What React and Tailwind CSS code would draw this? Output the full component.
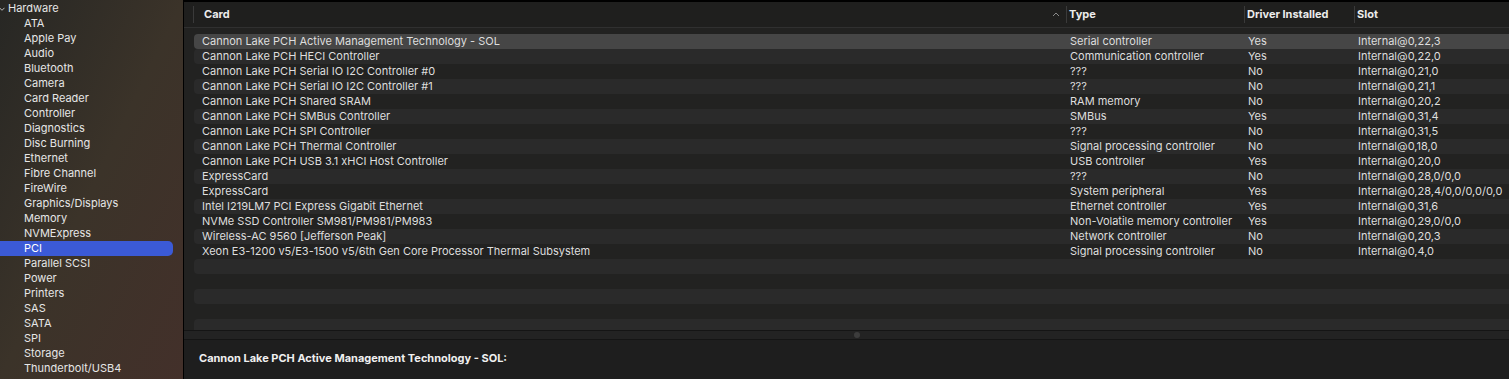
import React from 'react'

const sidebarItems = [
  'ATA', 'Apple Pay', 'Audio', 'Bluetooth', 'Camera', 'Card Reader', 'Controller',
  'Diagnostics', 'Disc Burning', 'Ethernet', 'Fibre Channel', 'FireWire',
  'Graphics/Displays', 'Memory', 'NVMExpress', 'PCI', 'Parallel SCSI', 'Power',
  'Printers', 'SAS', 'SATA', 'SPI', 'Storage', 'Thunderbolt/USB4',
]

const cards = [
  ['Cannon Lake PCH Active Management Technology - SOL', 'Serial controller', 'Yes', 'Internal@0,22,3'],
  ['Cannon Lake PCH HECI Controller', 'Communication controller', 'Yes', 'Internal@0,22,0'],
  ['Cannon Lake PCH Serial IO I2C Controller #0', '???', 'No', 'Internal@0,21,0'],
  ['Cannon Lake PCH Serial IO I2C Controller #1', '???', 'No', 'Internal@0,21,1'],
  ['Cannon Lake PCH Shared SRAM', 'RAM memory', 'No', 'Internal@0,20,2'],
  ['Cannon Lake PCH SMBus Controller', 'SMBus', 'Yes', 'Internal@0,31,4'],
  ['Cannon Lake PCH SPI Controller', '???', 'No', 'Internal@0,31,5'],
  ['Cannon Lake PCH Thermal Controller', 'Signal processing controller', 'No', 'Internal@0,18,0'],
  ['Cannon Lake PCH USB 3.1 xHCI Host Controller', 'USB controller', 'Yes', 'Internal@0,20,0'],
  ['ExpressCard', '???', 'No', 'Internal@0,28,0/0,0'],
  ['ExpressCard', 'System peripheral', 'Yes', 'Internal@0,28,4/0,0/0,0/0,0'],
  ['Intel I219LM7 PCI Express Gigabit Ethernet', 'Ethernet controller', 'Yes', 'Internal@0,31,6'],
  ['NVMe SSD Controller SM981/PM981/PM983', 'Non-Volatile memory controller', 'Yes', 'Internal@0,29,0/0,0'],
  ['Wireless-AC 9560 [Jefferson Peak]', 'Network controller', 'No', 'Internal@0,20,3'],
  ['Xeon E3-1200 v5/E3-1500 v5/6th Gen Core Processor Thermal Subsystem', 'Signal processing controller', 'No', 'Internal@0,4,0'],
]

const cols = 'grid grid-cols-[873px_178px_110px_1fr]'

const Sidebar = () => (
  <div className="w-[183px] shrink-0 bg-linear-to-br from-[#272724] via-[#3b3329] to-[#43302a] pt-px text-[11px] text-[#e6e6e6]">
    <div className="flex h-[15px] items-center">
      <svg width="6" height="6" viewBox="0 0 6 6" className="ml-[-1px] mr-[3px]">
        <path d="M0.5 1.8 L3 4.3 L5.5 1.8" fill="none" stroke="#bdbdbd" strokeWidth="1" />
      </svg>
      <span>Hardware</span>
    </div>
    {sidebarItems.map((item) => (
      <div
        key={item}
        className={
          item === 'PCI'
            ? 'flex h-[15px] w-[173px] items-center rounded-r-[5px] bg-[#3b5ad6] pl-[24px] text-white'
            : 'flex h-[15px] items-center pl-[24px]'
        }
      >
        {item}
      </div>
    ))}
  </div>
)

const Header = () => (
  <div className="flex h-[26px] shrink-0 items-center border-b border-[#303030] bg-[#1f1f1e] text-[11px] font-bold text-[#ececec]">
    <div className={`${cols} ml-[9px] w-full`}>
      <div className="flex items-center border-l border-[#3a3a3a] pl-[10px] pr-[6px]">
        <span className="flex-1">Card</span>
        <svg width="8" height="5" viewBox="0 0 8 5">
          <path d="M1 4 L4 1 L7 4" fill="none" stroke="#8a8a8a" strokeWidth="1" />
        </svg>
      </div>
      <div className="border-l border-[#3a3a3a] pl-[2px]">Type</div>
      <div className="border-l border-[#3a3a3a] pl-[2px]">Driver Installed</div>
      <div className="border-l border-[#3a3a3a] pl-[2px]">Slot</div>
    </div>
  </div>
)

const Row = ({ row, index }) => {
  const bg =
    index === 0 ? 'bg-[#464646]' : index % 2 === 1 ? 'bg-[#2a2a2a]' : 'bg-transparent'
  return (
    <div className={`${cols} ${bg} h-[15px] shrink-0 items-center rounded-l-[4px] text-[11px] text-[#dedede]`}>
      <div className="truncate pl-[8px]">{row ? row[0] : ''}</div>
      <div className="truncate pl-[3px]">{row ? row[1] : ''}</div>
      <div className="truncate pl-[3px]">{row ? row[2] : ''}</div>
      <div className="truncate pl-[3px]">{row ? row[3] : ''}</div>
    </div>
  )
}

const App = () => {
  const rows = [...cards, null, null, null, null, null]
  return (
    <div className="flex h-[379px] w-[1509px] overflow-hidden font-['Inter','Liberation_Sans',Arial,sans-serif]">
      <Sidebar />
      <div className="w-px shrink-0 bg-black" />
      <div className="flex min-w-0 flex-1 flex-col border-t-2 border-black bg-[#1e1e1e]">
        <div className="flex h-[328px] shrink-0 flex-col overflow-hidden">
          <Header />
          <div className="flex flex-col bg-[#222221] pl-[10px] pt-[6px]">
            {rows.map((row, i) => (
              <Row key={i} row={row} index={i} />
            ))}
          </div>
        </div>
        <div className="flex h-[10px] shrink-0 items-center justify-center border-y border-[#151515] bg-[#232323]">
          <div className="ml-[20px] h-[6px] w-[6px] rounded-full bg-[#3c3c3c]" />
        </div>
        <div className="flex-1 bg-[#1e1e1e] pl-[15px] pt-[10px] text-[11px] font-bold text-[#f0f0f0]">
          Cannon Lake PCH Active Management Technology - SOL:
        </div>
      </div>
    </div>
  )
}

export default App
